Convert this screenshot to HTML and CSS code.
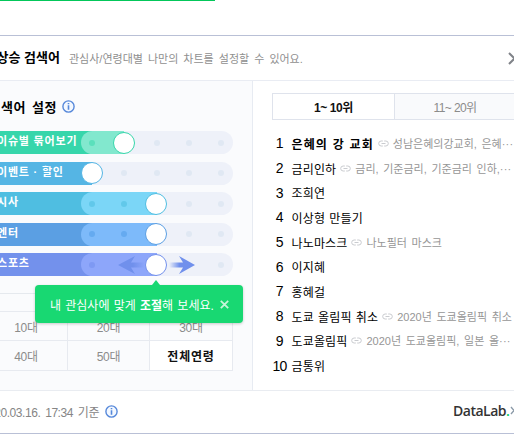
FILE: index.html
```html
<!DOCTYPE html>
<html lang="ko">
<head>
<meta charset="utf-8">
<title>급상승 검색어</title>
<link rel="stylesheet" href="styles.css">
</head>
<body>
<svg class="defs" width="0" height="0">
  <symbol id="info" viewBox="0 0 13 13"><circle cx="6.5" cy="6.5" r="5.6" fill="#f3f8ff" stroke="#5688da" stroke-width="1.4"/><path d="M6.5 5.3v4.4M6.5 3v1.3" stroke="#5688da" stroke-width="1.6"/></symbol>
  <symbol id="link" viewBox="0 0 11 7"><path d="M4.8 1H3.2a2.4 2.4 0 0 0 0 5H4.8M6.2 1H7.8a2.4 2.4 0 0 1 0 5H6.2M3.5 3.5h4" fill="none" stroke="#c9cbcf"/></symbol>
</svg>
<div class="accent"></div>
<section class="panel">
  <header class="head">
    <h2 class="title">상승 검색어</h2>
    <p class="desc">관심사/연령대별 나만의 차트를 설정할 수 있어요.</p>
    <svg class="close" width="13" height="13" viewBox="0 0 13 13"><path d="M1 1l11 11M12 1L1 12" stroke="#808389" stroke-width="2"/></svg>
  </header>
  <div class="main">
    <div class="settings">
      <div class="subhead"><h3 class="subtitle">색어 설정</h3><svg width="13" height="13"><use href="#info"/></svg></div>
      <div class="sliders">
        <div class="slider green"><span class="name">이슈별 묶어보기</span><div class="track l1"><i></i><i></i><i></i><i></i><i></i><b class="fill"></b><b class="knob"></b></div></div>
        <div class="slider sky"><span class="name">이벤트 · 할인</span><div class="track l0"><i></i><i></i><i></i><i></i><i></i><b class="fill"></b><b class="knob"></b></div></div>
        <div class="slider cyan"><span class="name">시사</span><div class="track l2"><i></i><i></i><i></i><i></i><i></i><b class="fill"></b><b class="knob"></b></div></div>
        <div class="slider blue"><span class="name">엔터</span><div class="track l2"><i></i><i></i><i></i><i></i><i></i><b class="fill"></b><b class="knob"></b></div></div>
        <div class="slider violet"><span class="name">스포츠</span><div class="track l2"><i></i><i></i><i></i><i></i><i></i><b class="fill"></b>
          <svg class="arrows" width="78" height="20" viewBox="0 0 78 20"><defs><linearGradient id="ga"><stop offset="0" stop-color="#7090ec"/><stop offset=".55" stop-color="#7090ec"/><stop offset="1" stop-color="#7090ec" stop-opacity="0"/></linearGradient><linearGradient id="gb"><stop offset="0" stop-color="#7090ec" stop-opacity="0"/><stop offset=".4" stop-color="#7090ec"/></linearGradient></defs><path d="M0 10L17 1L13 7.5H27V12.5H13L17 19Z" fill="url(#ga)"/><path d="M77 10L61 1L65 7.5H51V12.5H65L61 19Z" fill="url(#gb)"/></svg>
          <b class="knob"></b></div></div>
        <div class="tip"><span>내 관심사에 맞게 <strong>조절</strong>해 보세요.</span><svg width="9" height="9" viewBox="0 0 9 9"><path d="M.8.8l7.4 7.4M8.2.8L.8 8.2" stroke="#c5f5d9" stroke-width="1.8"/></svg></div>
      </div>
      <div class="ages">
        <div class="cell wide"></div>
        <div class="cell">10대</div><div class="cell">20대</div><div class="cell">30대</div>
        <div class="cell">40대</div><div class="cell">50대</div><div class="cell on">전체연령</div>
      </div>
    </div>
    <div class="ranking">
      <div class="tabs"><div class="tab on">1~ 10위</div><div class="tab">11~ 20위</div></div>
      <ol class="list">
        <li><span class="num">1</span><span class="word strong">은혜의 강 교회</span><svg width="11" height="7"><use href="#link"/></svg><span class="rel">성남은혜의강교회, 은혜<em>···</em></span></li>
        <li><span class="num">2</span><span class="word">금리인하</span><svg width="11" height="7"><use href="#link"/></svg><span class="rel">금리, 기준금리, 기준금리 인하,<em>···</em></span></li>
        <li><span class="num">3</span><span class="word">조희연</span></li>
        <li><span class="num">4</span><span class="word">이상형 만들기</span></li>
        <li><span class="num">5</span><span class="word">나노마스크</span><svg width="11" height="7"><use href="#link"/></svg><span class="rel">나노필터 마스크</span></li>
        <li><span class="num">6</span><span class="word">이지혜</span></li>
        <li><span class="num">7</span><span class="word">홍혜걸</span></li>
        <li><span class="num">8</span><span class="word">도쿄 올림픽 취소</span><svg width="11" height="7"><use href="#link"/></svg><span class="rel">2020년 도쿄올림픽 취소</span></li>
        <li><span class="num">9</span><span class="word">도쿄올림픽</span><svg width="11" height="7"><use href="#link"/></svg><span class="rel">2020년 도쿄올림픽, 일본 올<em>···</em></span></li>
        <li><span class="num">10</span><span class="word">금통위</span></li>
      </ol>
    </div>
  </div>
  <footer class="foot">
    <div class="date"><span>2020.03.16. 17:34 기준</span><svg width="13" height="13"><use href="#info"/></svg></div>
    <div class="logo">DataLab<span class="dot">.</span><svg width="8" height="9" viewBox="0 0 8 9"><path d="M1 1l6 7M7 1L1 8" stroke="#8b9aa8" stroke-width="1.4"/></svg></div>
  </footer>
</section>
</body>
</html>
```
FILE: styles.css
```css
* { box-sizing: border-box; }
body { margin: 0; width: 514px; height: 434px; overflow: hidden; background: #fff; font-family: "Liberation Sans", "Noto Sans CJK KR", sans-serif; color: #000; }
h2, h3, p, ol { margin: 0; padding: 0; }
svg { flex: none; display: block; }
.defs { position: absolute; }
.accent { width: 215px; height: 1px; background: #03c75a; }
.panel { margin-top: 34px; height: 399px; border-top: 1px solid #b9c0d6; border-bottom: 1px solid #b9c0d6; white-space: nowrap; }
.head { display: flex; align-items: center; height: 45px; border-bottom: 1px solid #e9ecf3; overflow: hidden; }
.title { width: 60px; flex: none; display: flex; justify-content: flex-end; font-size: 13px; line-height: 20px; white-space: pre; }
.desc { margin-left: 9px; width: 439px; flex: none; font-size: 11px; word-spacing: 2px; color: #8f8f8f; }
.main { display: flex; height: 310px; border-bottom: 1px solid #e9ecf1; }
.settings { width: 253px; flex: none; background: #fafbfd; border-right: 1px solid #e7ebf2; overflow: hidden; }
.subhead { display: flex; align-items: center; height: 50px; }
.subtitle { width: 57px; margin-right: 5px; display: flex; justify-content: flex-end; font-size: 13px; letter-spacing: .5px; word-spacing: 2px; white-space: pre; }
.sliders { position: relative; display: grid; row-gap: 7.5px; }
.slider { display: flex; align-items: center; width: 232.5px; height: 23px; border-radius: 0 12px 12px 0; background: linear-gradient(90deg, var(--base) 92px, #eef1f9 92px); }
.name { width: 84px; flex: none; margin: -3px 0 0 -3px; font-size: 11px; letter-spacing: .8px; font-weight: 700; color: #fff; line-height: 16px; }
.track { position: relative; width: 151.5px; height: 23px; flex: none; display: flex; align-items: center; gap: 26.3px; padding-left: 8px; border-radius: 12px; }
.track i { position: relative; z-index: 1; width: 6px; height: 6px; flex: none; border-radius: 50%; background: #e0e8f3; }
.fill { position: absolute; left: 0; top: 0; height: 23px; border-radius: 12px 0 0 12px; background: var(--light); }
.knob { position: absolute; z-index: 3; top: .5px; width: 22px; height: 22px; border-radius: 50%; background: #fff; border: 1px solid var(--base); }
.l0 .fill { width: 11px; background: var(--base); }
.l1 .fill { width: 43px; }
.l2 .fill { width: 76px; }
.l0 .knob { left: 0; }
.l1 .knob { left: 32px; }
.l2 .knob { left: 64px; }
.l1 i:first-child, .l2 i:nth-child(-n+2) { background: var(--mark); }
.green { --base: #37d6ab; --light: #82e8ce; --mark: #5be0bc; }
.sky { --base: #55b5e4; --light: #80c8ed; --mark: #80c8ed; }
.cyan { --base: #4fbee1; --light: #7bd6f7; --mark: #61c8ea; }
.blue { --base: #5b9fe3; --light: #7dbafa; --mark: #65aaf0; }
.violet { --base: #7391ec; --light: #8da6fa; --mark: #7e99f3; }
.violet i:nth-child(n+2):nth-child(-n+4) { background: transparent; }
.arrows { position: absolute; z-index: 2; left: 37px; top: 1.5px; }
.tip { position: absolute; z-index: 5; left: 35px; top: 154px; width: 208px; height: 38px; display: flex; align-items: center; gap: 6px; padding-left: 15px; border-radius: 4px; background: #18d872; color: #fff; font-size: 12px; word-spacing: .9px; box-shadow: 0 1px 3px #0003; }
.tip::before { content: ""; position: absolute; left: 117px; top: -5px; border: 4.5px solid transparent; border-top: 0; border-bottom: 5px solid #18d872; }
.ages { display: grid; grid-template-columns: 83px 82px 83px; grid-template-rows: 18px 29px 30px; width: 248px; margin: 17px 0 0 -15px; border-top: 1px solid #e5e9ee; font-size: 12px; letter-spacing: -.3px; color: #8b8b8b; }
.cell { display: flex; align-items: center; justify-content: center; border-right: 1px solid #e7eaf0; border-bottom: 1px solid #e7eaf0; }
.cell.wide { grid-column: 1 / -1; }
.cell.on { background: #fff; color: #111; font-weight: 700; letter-spacing: .8px; }
.ranking { width: 261px; flex: none; padding: 12px 0 0 19px; overflow: hidden; }
.tabs { display: grid; grid-template-columns: 121px 124px; height: 27px; border: 1px solid #dfe3ec; width: 247px; }
.tab { display: flex; align-items: center; justify-content: center; padding-right: 3px; background: #f9fafc; color: #8b8b8b; font-size: 12px; letter-spacing: -.6px; border-left: 1px solid #dfe3ec; }
.tab.on { background: #fff; border-left: 0; padding-right: 0; color: #111; font-weight: 700; letter-spacing: -.4px; }
.list { list-style: none; padding-top: 11px; }
.list li { display: flex; align-items: center; height: 24.7px; }
.num { width: 15px; margin-right: 4.5px; display: flex; justify-content: center; font-size: 14px; letter-spacing: -.5px; }
.list li:last-child .num { letter-spacing: -.8px; }
.word { font-size: 12px; letter-spacing: .15px; word-spacing: .7px; margin-right: 4px; }
.strong { font-weight: 700; letter-spacing: 1.1px; word-spacing: .3px; }
.rel { margin-left: 4px; margin-top: -1px; font-size: 11px; color: #969696; word-spacing: 1.6px; }
.rel em { font-style: normal; letter-spacing: .2px; }
.foot { display: flex; align-items: center; height: 41px; }
.date { width: 118px; flex: none; display: flex; align-items: center; justify-content: flex-end; gap: 6px; font-size: 12px; letter-spacing: -.45px; word-spacing: 2px; color: #858585; }
.logo { margin-left: 335px; margin-top: -2px; display: flex; align-items: center; font-family: "Open Sans", sans-serif; font-size: 14px; font-weight: 600; letter-spacing: -.5px; color: #333; }
.dot { color: #03c75a; margin-right: 1px; }
```
